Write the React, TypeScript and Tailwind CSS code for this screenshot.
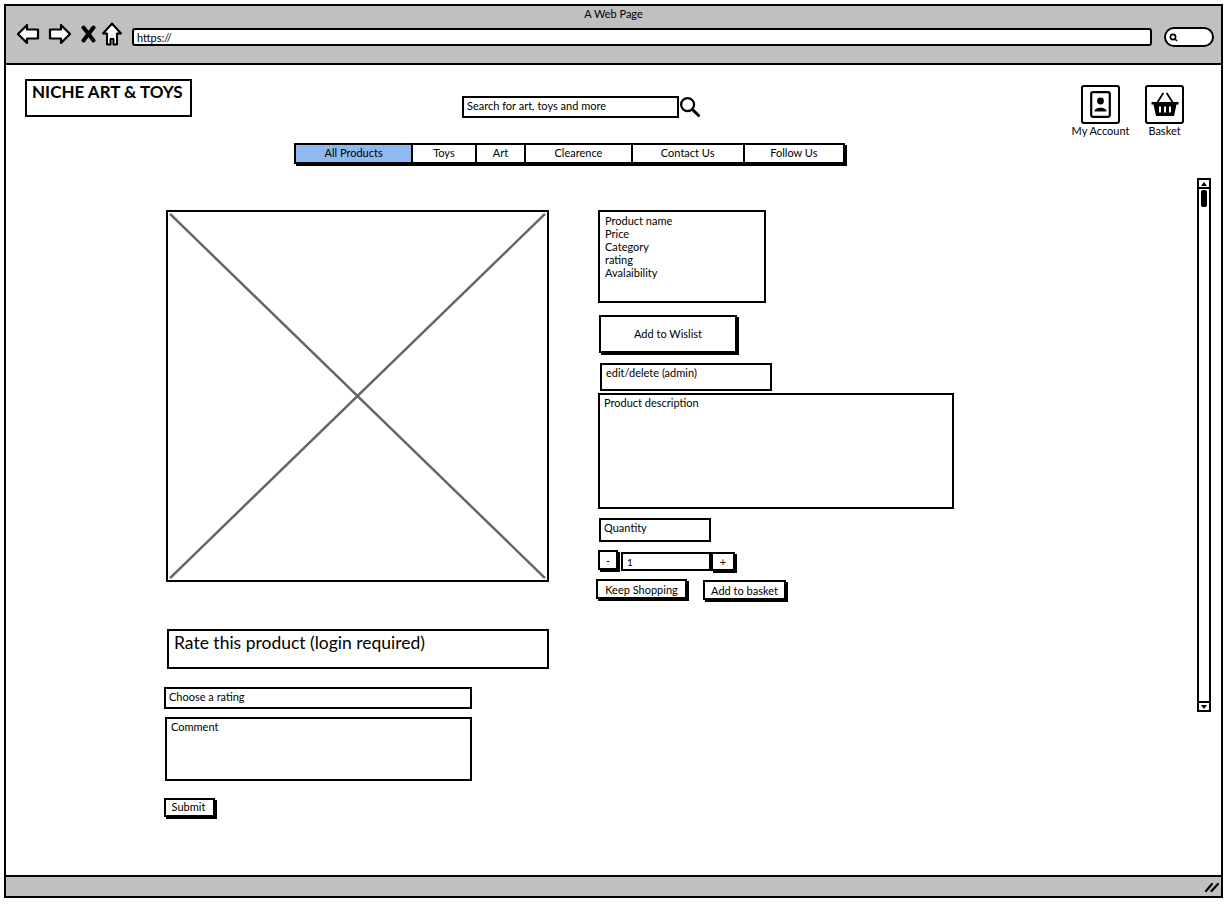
import React from "react";

const font = "font-['Lato','Liberation_Sans',sans-serif]";

function ArrowIcon({ flip }: { flip?: boolean }) {
  return (
    <svg width="24" height="22" viewBox="0 0 24 22" className={flip ? "-scale-x-100" : ""}>
      <path d="M2 11 L11 2 L11 6.5 L22 6.5 L22 15.5 L11 15.5 L11 20 Z" fill="#fff" stroke="#000" strokeWidth="2.2" strokeLinejoin="round" />
    </svg>
  );
}

function CloseIcon() {
  return (
    <svg width="15" height="18" viewBox="0 0 15 18">
      <path d="M2.5 2.5 L12.5 15.5 M12.5 2.5 L2.5 15.5" stroke="#000" strokeWidth="4" strokeLinecap="round" fill="none" />
    </svg>
  );
}

function HomeIcon() {
  return (
    <svg width="20" height="24" viewBox="0 0 20 24">
      <path d="M10 1.5 L19 11.5 L15 11.5 L15 22.5 L11.5 22.5 L11.5 17 L8.5 17 L8.5 22.5 L5 22.5 L5 11.5 L1 11.5 Z" fill="#fff" stroke="#000" strokeWidth="2" strokeLinejoin="round" />
    </svg>
  );
}

function SearchIcon() {
  return (
    <svg width="21" height="21" viewBox="0 0 22 22">
      <circle cx="9" cy="9" r="6.8" fill="none" stroke="#000" strokeWidth="2.4" />
      <path d="M14 14 L20.5 20.5" stroke="#000" strokeWidth="3" strokeLinecap="round" />
    </svg>
  );
}

function AccountIcon() {
  return (
    <svg width="21" height="27" viewBox="0 0 21 27">
      <rect x="1.2" y="1.2" width="18.6" height="24.6" rx="2" fill="#fff" stroke="#000" strokeWidth="2.2" />
      <circle cx="10.5" cy="10" r="3.4" fill="#000" />
      <path d="M4.5 20.5 C4.5 15.5 16.5 15.5 16.5 20.5 Z" fill="#000" />
    </svg>
  );
}

function BasketIcon() {
  return (
    <svg width="28" height="25" viewBox="0 0 28 25">
      <path d="M6 11 L12 1.5 M22 11 L16 1.5" stroke="#000" strokeWidth="1.8" fill="none" strokeLinecap="round" />
      <path d="M0.5 10 H27.5 V12.5 H25.5 L23 24 H5 L2.5 12.5 H0.5 Z" fill="#000" />
      <path d="M9 14.5 V20.5 M14 14.5 V20.5 M19 14.5 V20.5" stroke="#fff" strokeWidth="2" fill="none" />
    </svg>
  );
}

function ImagePlaceholder() {
  return (
    <svg viewBox="0 0 383 372" className="block h-full w-full">
      <path d="M2 2 L381 370 M381 2 L2 370" stroke="#666" strokeWidth="2.5" fill="none" />
    </svg>
  );
}

function Scrollbar() {
  return (
    <div className="flex h-[534px] w-[14px] flex-col border-2 border-black bg-white">
      <div className="flex h-[9px] items-center justify-center border-b-2 border-black">
        <div className="h-0 w-0 border-x-[3px] border-b-[4px] border-x-transparent border-b-black" />
      </div>
      <div className="mx-auto mt-px h-[17px] w-[6px] rounded-[2px] bg-black" />
      <div className="flex-1" />
      <div className="flex h-[9px] items-center justify-center border-t-2 border-black">
        <div className="h-0 w-0 border-x-[3px] border-t-[4px] border-x-transparent border-t-black" />
      </div>
    </div>
  );
}

const navItems = [
  { label: "All Products", width: "w-[118px]", active: true },
  { label: "Toys", width: "w-[64px]" },
  { label: "Art", width: "w-[50px]" },
  { label: "Clearence", width: "w-[107px]" },
  { label: "Contact Us", width: "w-[113px]" },
  { label: "Follow Us", width: "w-[99px]" },
];

export default function App() {
  return (
    <div className={`h-[905px] w-[1229px] overflow-hidden bg-white pl-[4px] pt-[4px] text-[11px] leading-[13px] text-black ${font}`}>
      <div className="flex h-[894px] w-[1219px] flex-col border-2 border-black bg-white">
        {/* Browser bar */}
        <div className="h-[59px] shrink-0 border-b-2 border-black bg-[#c0c0c0]">
          <div className="h-[16px] pt-px text-center leading-[13px]">A Web Page</div>
          <div className="flex items-start pl-[10px]">
            <div className="mt-px"><ArrowIcon /></div>
            <div className="ml-[8px] mt-px"><ArrowIcon flip /></div>
            <div className="ml-[9px] mt-[3px]"><CloseIcon /></div>
            <div className="ml-[6px]"><HomeIcon /></div>
            <div className="ml-[10px] mt-[6px] flex h-[18px] w-[1020px] items-center rounded-[3px] border-2 border-black bg-white pl-[3px]">
              https://
            </div>
            <div className="ml-[12px] mt-[5px] flex h-[20px] w-[50px] items-center rounded-full border-2 border-black bg-white pl-[3px]">
              <svg width="9" height="9" viewBox="0 0 9 9">
                <circle cx="4" cy="4" r="2.6" fill="none" stroke="#000" strokeWidth="1.6" />
                <path d="M6 6 L8 8" stroke="#000" strokeWidth="1.6" />
              </svg>
            </div>
          </div>
        </div>

        {/* Page */}
        <div className="relative flex-1">
          <div className="flex items-start">
            <div className="ml-[19px] mt-[14px] h-[38px] w-[167px] border-2 border-black pl-[5px] pt-px text-[17px] font-bold leading-[20px]">
              NICHE ART &amp; TOYS
            </div>
            <div className="ml-[270px] mt-[31px] flex items-start">
              <div className="flex h-[22px] w-[217px] items-center border-2 border-black pb-[3px] pl-[3px]">
                Search for art, toys and more
              </div>
              <SearchIcon />
            </div>
            <div className="ml-[381px] mt-[20px] flex w-[39px] flex-col items-center">
              <div className="flex h-[39px] w-[39px] shrink-0 items-center justify-center rounded-[3px] border-2 border-black">
                <AccountIcon />
              </div>
              <div className="whitespace-nowrap">My Account</div>
            </div>
            <div className="ml-[25px] mt-[20px] flex w-[39px] flex-col items-center">
              <div className="flex h-[39px] w-[39px] shrink-0 items-center justify-center rounded-[3px] border-2 border-black">
                <BasketIcon />
              </div>
              <div className="whitespace-nowrap">Basket</div>
            </div>
          </div>

          <nav className="ml-[288px] mt-[6px] flex h-[21px] w-[551px] border-2 border-black shadow-[2px_2px_0_#000]">
            {navItems.map((item) => (
              <div
                key={item.label}
                className={`flex items-center justify-center border-r-2 border-black pb-[2px] last:border-r-0 ${item.width} ${item.active ? "bg-[#8fb9f0]" : "bg-white"}`}
              >
                {item.label}
              </div>
            ))}
          </nav>

          <div className="mt-[46px] flex items-start">
            {/* Left column */}
            <div className="ml-[160px] w-[383px]">
              <div className="h-[372px] border-2 border-black">
                <ImagePlaceholder />
              </div>
              <div className="ml-px mt-[47px] h-[40px] w-[382px] border-2 border-black pl-[5px] pt-[2px] text-[17.5px] leading-[20px]">
                Rate this product (login required)
              </div>
              <div className="-ml-[2px] mt-[18px] flex h-[22px] w-[308px] items-center border-2 border-black pb-[3px] pl-[3px]">
                Choose a rating
              </div>
              <div className="-ml-px mt-[8px] h-[64px] w-[307px] border-2 border-black pl-[4px] pt-px">
                Comment
              </div>
              <div className="-ml-[2px] mt-[17px] flex h-[19px] w-[51px] items-center justify-center border-2 border-black pb-[2px] pr-[2px] shadow-[2px_2px_0_#000]">
                Submit
              </div>
            </div>

            {/* Right column */}
            <div className="ml-[49px] w-[356px]">
              <div className="h-[93px] w-[168px] border-2 border-black pl-[5px] pt-[2px]">
                <div>Product name</div>
                <div>Price</div>
                <div>Category</div>
                <div>rating</div>
                <div>Avalaibility</div>
              </div>
              <div className="ml-px mt-[12px] flex h-[38px] w-[138px] items-center justify-center border-2 border-black pb-[2px] shadow-[2px_2px_0_#000]">
                Add to Wislist
              </div>
              <div className="ml-[2px] mt-[10px] h-[28px] w-[172px] border-2 border-black pl-[4px] pt-px">
                edit/delete (admin)
              </div>
              <div className="mt-[2px] h-[116px] w-[356px] border-2 border-black pl-[4px] pt-px">
                Product description
              </div>
              <div className="ml-px mt-[9px] flex h-[24px] w-[112px] items-start border-2 border-black pl-[3px] pt-px">
                Quantity
              </div>
              <div className="mt-[8px] flex items-start">
                <div className="flex h-[20px] w-[20px] items-center justify-center border-2 border-black shadow-[2px_2px_0_#000]">-</div>
                <div className="ml-[3px] mt-[2px] flex h-[19px] w-[90px] items-center border-2 border-black pl-[4px] pt-[2px] text-[10px]">1</div>
                <div className="mt-[2px] flex h-[19px] w-[24px] items-center justify-center border-2 border-black shadow-[2px_2px_0_#000]">+</div>
              </div>
              <div className="-ml-[2px] mt-[8px] flex items-start">
                <div className="flex h-[20px] w-[91px] items-center justify-center border-2 border-black shadow-[2px_2px_0_#000]">Keep Shopping</div>
                <div className="ml-[16px] mt-px flex h-[20px] w-[83px] items-center justify-center border-2 border-black shadow-[2px_2px_0_#000]">Add to basket</div>
              </div>
            </div>
          </div>

          <div className="absolute left-[1191px] top-[113px]">
            <Scrollbar />
          </div>
        </div>

        {/* Status bar */}
        <div className="flex h-[21px] shrink-0 items-center justify-end border-t-2 border-black bg-[#c0c0c0] pr-[2px]">
          <svg width="14" height="10" viewBox="0 0 14 10">
            <path d="M1 9 L7 2 M6.5 9 L13 2" stroke="#000" strokeWidth="2.2" strokeLinecap="round" fill="none" />
          </svg>
        </div>
      </div>
    </div>
  );
}
